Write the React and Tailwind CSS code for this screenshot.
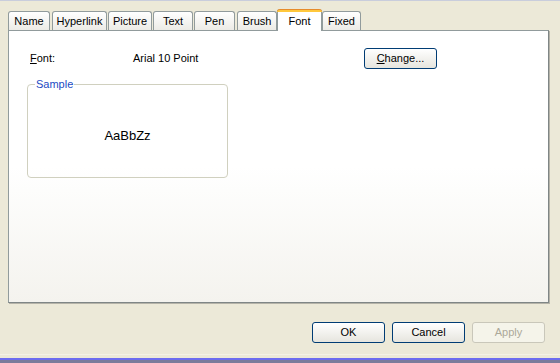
import React from 'react';

// tab widths and the gap before each, as measured on the strip
const tabs = [
    { label: 'Name', cls: 'w-[42px]' },
    { label: 'Hyperlink', cls: 'w-[55px] ml-[2px]' },
    { label: 'Picture', cls: 'w-[44px] ml-[1px]' },
    { label: 'Text', cls: 'w-[40px] ml-[1px]' },
    { label: 'Pen', cls: 'w-[41px] ml-[1px]' },
    { label: 'Brush', cls: 'w-[40px] ml-[2px]' },
    { label: 'Font', cls: 'w-[45px]', active: true },
    { label: 'Fixed', cls: 'w-[39px]' },
];

const XpButton = ({ children, disabled, className = '' }) => (
    <button
        disabled={disabled}
        className={`w-[73px] h-[21px] rounded-[3px] border text-[11px] leading-none flex items-center justify-center ${disabled ? 'border-[#C9C7BA] bg-[#F5F4EA] text-[#ACA899]' : 'border-[#003C74] bg-gradient-to-b from-white to-[#E6E5DE] text-black'} ${className}`}
    >
        {children}
    </button>
);

export default function App() {
    return (
        <div className="w-[560px] h-[363px] bg-[#ECE9D8] flex flex-col overflow-hidden font-['Liberation_Sans',Arial,sans-serif] text-[11px] text-black">
            <div className="h-[1px] bg-[#C9CDDC]" />

            {/* tab strip */}
            <div className="flex items-end pl-[8px] pt-[7px] h-[29px]">
                {tabs.map((t) =>
                    t.active ? (
                        <div
                            key={t.label}
                            className={`${t.cls} h-[22px] relative z-10 -mb-[1px] bg-white border-x border-[#919B9C] rounded-t-[3px] flex flex-col`}
                        >
                            <div className="h-[3px] rounded-t-[3px] bg-[#FFC83C] border-t border-[#E68B2C] -mx-[1px]" />
                            <div className="flex-1 flex items-start justify-center pt-[1px]">{t.label}</div>
                        </div>
                    ) : (
                        <div
                            key={t.label}
                            className={`${t.cls} h-[19px] border border-b-0 border-[#919B9C] rounded-t-[3px] bg-gradient-to-b from-white to-[#ECEBE6] flex items-center justify-center pt-[1px]`}
                        >
                            {t.label}
                        </div>
                    )
                )}
            </div>

            {/* page */}
            <div className="ml-[8px] w-[541px] h-[273px] border border-[#919B9C] border-r-[#7F8686] border-b-[#7F8686] shadow-[1px_1px_0_#B5B3A8] bg-gradient-to-b from-white via-white to-[#F4F3EE] flex flex-col">
                <div className="flex items-center h-[22px] mt-[16px] pl-[21px]">
                    <span className="w-[103px]"><span className="underline">F</span>ont:</span>
                    <span className="w-[231px]">Arial 10 Point</span>
                    <XpButton>
                        <span><span className="underline">C</span>hange...</span>
                    </XpButton>
                </div>

                <fieldset className="ml-[18px] mt-[9px] w-[201px] h-[100px] border border-[#D0D0BF] rounded-[4px] px-0">
                    <legend className="ml-[7px] px-[1px] text-[#1C4BC4] leading-[13px]">Sample</legend>
                    <div className="flex justify-center pt-[37px] text-[13px] leading-[15px]">AaBbZz</div>
                </fieldset>
            </div>

            {/* dialog buttons */}
            <div className="flex justify-end gap-[7px] pr-[15px] mt-[19px]">
                <XpButton>OK</XpButton>
                <XpButton>Cancel</XpButton>
                <XpButton disabled>Apply</XpButton>
            </div>

            <div className="mt-auto h-[1px] bg-[#F4F2E6] mb-[3px]" />
            <div className="h-[2px] bg-[#6C6CEF]" />
            <div className="h-[3px] bg-[#7B7B9B]" />
        </div>
    );
}
